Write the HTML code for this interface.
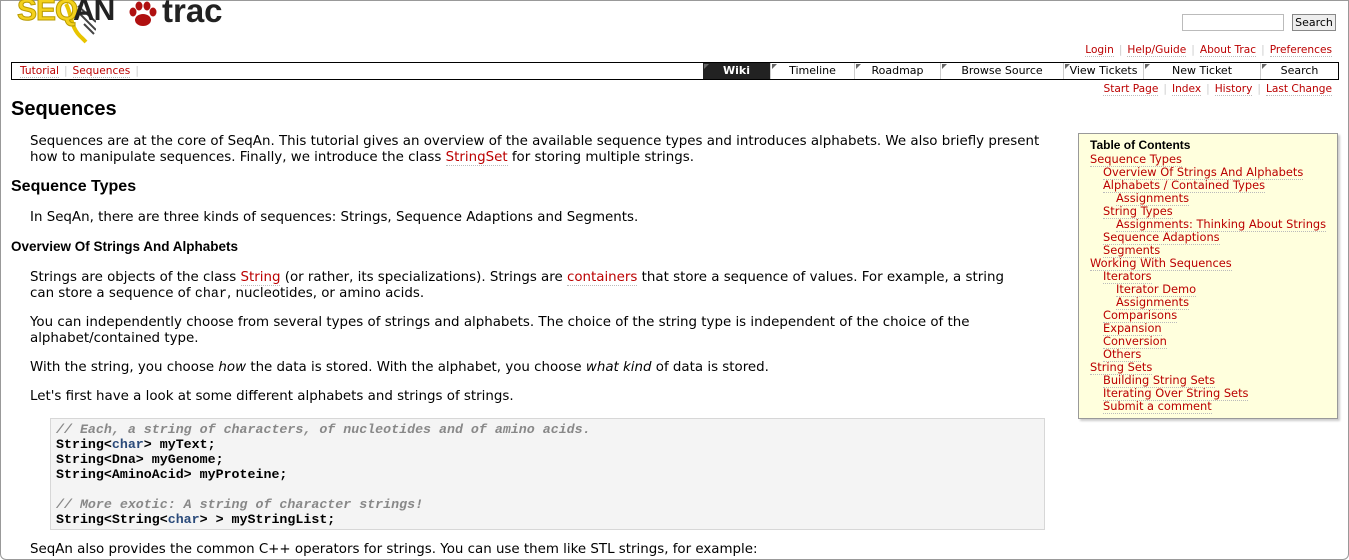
<!DOCTYPE html>
<html><head><meta charset="utf-8"><style>
*{margin:0;padding:0;box-sizing:border-box}
body{width:1349px;height:551px;overflow:hidden;background:#fff;font-family:"DejaVu Sans","Liberation Sans",sans-serif;color:#000;position:relative}
#frame{position:absolute;left:0;top:0;width:1349px;height:560px;border:1px solid #999;border-radius:0 0 6px 6px}
a{color:#b00;text-decoration:none;border-bottom:1px dotted #bbb}
.abs{position:absolute;white-space:nowrap}
.p{font-size:13.4px;line-height:16px;left:30px}
.meta{font-size:10.6px;color:#b00}
.meta span.sep{color:#ccc;margin:0 5px}
#mainnav{position:absolute;left:11px;top:62px;width:1328px;height:18px;border:1px solid #000;font-size:11px}
.tab{position:absolute;top:0;height:16px;line-height:16px;text-align:center;border-left:1px solid #ccc}
.tab:before{content:"";position:absolute;left:1px;top:1px;border-left:5px solid #666;border-bottom:5px solid transparent}
h1,h2,h3{font-family:"Liberation Sans",sans-serif;font-weight:bold}
#toc{position:absolute;left:1078px;top:133px;width:260px;height:286px;background:#ffffdd;border:1px solid #999;box-shadow:2px 2px 2px #ccc;font-size:11.4px;line-height:13px;padding:5px 0 0 11px}
#toc div{white-space:nowrap}
#toc .l2{padding-left:13px}#toc .l3{padding-left:26px}
pre{position:absolute;left:50px;top:418px;width:995px;height:112px;background:#f4f4f4;border:1px solid #d7d7d7;font-family:"Liberation Mono",monospace;font-size:13.3px;line-height:15px;padding:3px 0 0 5px;font-weight:bold;color:#000}
pre i{color:#888;font-weight:bold}
pre b{color:#2a4a7a}
</style></head><body>
<div id="frame"></div>
<svg class="abs" style="left:60px;top:0" width="36" height="44"><path d="M6 4 C12 14 10 28 22 38 L26 42" stroke="#e8c400" stroke-width="4" fill="none"/><path d="M18 6 L36 22 M20 14 L36 30 M24 24 L34 34" stroke="#444" stroke-width="2"/></svg>
<div class="abs" style="left:17px;top:-6px;font:bold 30px 'Liberation Sans',sans-serif;color:#f4d11c;letter-spacing:-1px;-webkit-text-stroke:1px #b89a00">SEQ</div>
<div class="abs" style="left:73px;top:-6px;font:bold 30px 'Liberation Sans',sans-serif;color:#222;letter-spacing:-1px">AN</div>
<svg class="abs" style="left:127px;top:1px" width="32" height="28"><g fill="#b01010"><ellipse cx="16" cy="19" rx="8" ry="6"/><ellipse cx="6" cy="11" rx="3.5" ry="4.5"/><ellipse cx="12" cy="5" rx="3.5" ry="4.5"/><ellipse cx="20" cy="5" rx="3.5" ry="4.5"/><ellipse cx="26" cy="11" rx="3.5" ry="4.5"/></g></svg>
<div class="abs" style="left:162px;top:-8px;font:bold 33px 'Liberation Sans',sans-serif;color:#222">trac</div>

<div class="abs" style="left:1182px;top:14px;width:102px;height:17px;border:1px solid #bbb;background:#fff"></div>
<div class="abs" style="left:1292px;top:14px;width:44px;height:17px;border:1px solid #888;background:#eee;font-size:11px;line-height:15px;text-align:center">Search</div>

<div class="abs meta" style="right:17px;top:44px"><a>Login</a><span class="sep">|</span><a>Help/Guide</a><span class="sep">|</span><a>About Trac</a><span class="sep">|</span><a>Preferences</a></div>

<div id="mainnav">
<div class="abs" style="left:8px;top:1px;font-size:10.6px;line-height:14px"><a>Tutorial</a><span style="color:#ccc;margin:0 5px">|</span><a>Sequences</a><span style="color:#ccc;margin-left:5px">|</span></div>
<div class="tab" style="left:691px;width:67px;background:#222;color:#fff;font-weight:bold;border:0">Wiki</div>
<div class="tab" style="left:758px;width:84px">Timeline</div>
<div class="tab" style="left:842px;width:86px">Roadmap</div>
<div class="tab" style="left:928px;width:123px">Browse Source</div>
<div class="tab" style="left:1051px;width:80px">View Tickets</div>
<div class="tab" style="left:1131px;width:117px">New Ticket</div>
<div class="tab" style="left:1248px;width:78px">Search</div>
</div>

<div class="abs meta" style="right:17px;top:83px"><a>Start Page</a><span class="sep">|</span><a>Index</a><span class="sep">|</span><a>History</a><span class="sep">|</span><a>Last Change</a></div>

<h1 class="abs" style="left:11px;top:98px;font-size:20px">Sequences</h1>
<div class="abs p" style="top:134px">Sequences are at the core of SeqAn. This tutorial gives an overview of the available sequence types and introduces alphabets. We also briefly present<br>how to manipulate sequences. Finally, we introduce the class <a>StringSet</a> for storing multiple strings.</div>
<h2 class="abs" style="left:11px;top:178px;font-size:16px">Sequence Types</h2>
<div class="abs p" style="top:210px">In SeqAn, there are three kinds of sequences: Strings, Sequence Adaptions and Segments.</div>
<h3 class="abs" style="left:11px;top:239px;font-size:13.5px">Overview Of Strings And Alphabets</h3>
<div class="abs p" style="top:270px">Strings are objects of the class <a>String</a> (or rather, its specializations). Strings are <a>containers</a> that store a sequence of values. For example, a string<br>can store a sequence of <span style="font-family:'Liberation Mono',monospace">char</span>, nucleotides, or amino acids.</div>
<div class="abs p" style="top:315px">You can independently choose from several types of strings and alphabets. The choice of the string type is independent of the choice of the<br>alphabet/contained type.</div>
<div class="abs p" style="top:360px">With the string, you choose <i>how</i> the data is stored. With the alphabet, you choose <i>what kind</i> of data is stored.</div>
<div class="abs p" style="top:389px">Let's first have a look at some different alphabets and strings of strings.</div>
<pre><i>// Each, a string of characters, of nucleotides and of amino acids.</i>
String&lt;<b>char</b>&gt; myText;
String&lt;Dna&gt; myGenome;
String&lt;AminoAcid&gt; myProteine;

<i>// More exotic: A string of character strings!</i>
String&lt;String&lt;<b>char</b>&gt; &gt; myStringList;</pre>
<div class="abs p" style="top:542px">SeqAn also provides the common C++ operators for strings. You can use them like STL strings, for example:</div>

<div id="toc">
<div style="font-family:'Liberation Sans',sans-serif;font-weight:bold;font-size:12px;margin-bottom:1px">Table of Contents</div>
<div><a>Sequence Types</a></div>
<div class="l2"><a>Overview Of Strings And Alphabets</a></div>
<div class="l2"><a>Alphabets / Contained Types</a></div>
<div class="l3"><a>Assignments</a></div>
<div class="l2"><a>String Types</a></div>
<div class="l3"><a>Assignments: Thinking About Strings</a></div>
<div class="l2"><a>Sequence Adaptions</a></div>
<div class="l2"><a>Segments</a></div>
<div><a>Working With Sequences</a></div>
<div class="l2"><a>Iterators</a></div>
<div class="l3"><a>Iterator Demo</a></div>
<div class="l3"><a>Assignments</a></div>
<div class="l2"><a>Comparisons</a></div>
<div class="l2"><a>Expansion</a></div>
<div class="l2"><a>Conversion</a></div>
<div class="l2"><a>Others</a></div>
<div><a>String Sets</a></div>
<div class="l2"><a>Building String Sets</a></div>
<div class="l2"><a>Iterating Over String Sets</a></div>
<div class="l2"><a>Submit a comment</a></div>
</div>
</body></html>
